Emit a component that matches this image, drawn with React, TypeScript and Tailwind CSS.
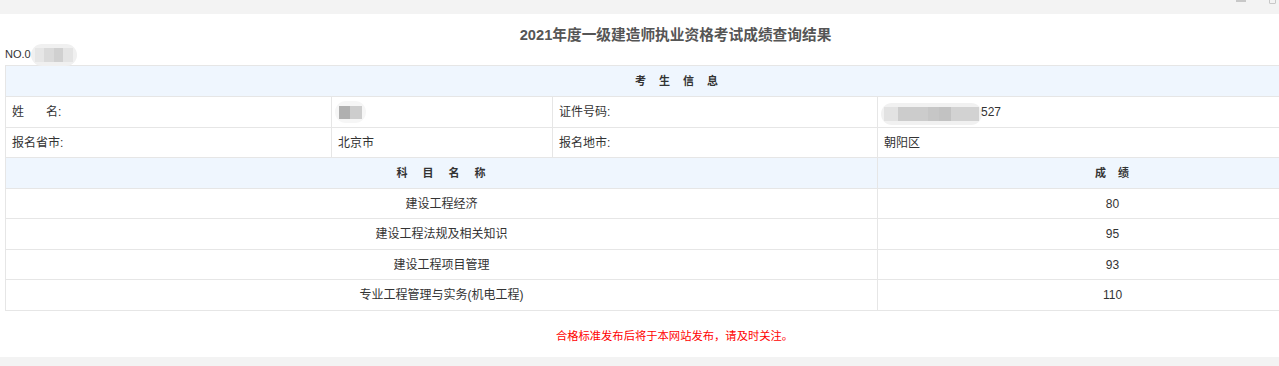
import React from "react"

const font = { fontFamily: '"Liberation Sans", "Noto Sans CJK SC", sans-serif' }

const subjects = [
  { name: "建设工程经济", score: "80", h: "h-[30px]" },
  { name: "建设工程法规及相关知识", score: "95", h: "h-[31px]" },
  { name: "建设工程项目管理", score: "93", h: "h-[30px]" },
  { name: "专业工程管理与实务(机电工程)", score: "110", h: "h-[31px]" },
]

const td = "border border-[#e6e6e6] px-[6px] align-middle"

export default function App() {
  return (
    <div className="w-[1279px] h-[366px] bg-[#f3f3f3] text-[12px] text-[#333] overflow-hidden" style={font}>
      <div className="h-[14px] relative">
        <span className="absolute left-[1236px] top-0 w-[10px] h-[2px] bg-[#c8c8c8]" />
        <span className="absolute left-[1269px] top-[-2px] w-[7px] h-[6px] border border-[#c8c8c8] rounded-[1px]" />
      </div>
      <div className="bg-white h-[343px] pt-[12px] overflow-hidden">
        <h1 className="text-center text-[14.7px] font-bold text-[#555] leading-[18px] pl-[72px]">
          2021年度一级建造师执业资格考试成绩查询结果
        </h1>
        <div className="flex items-center h-[21px] px-[5px] text-[11px] leading-none">
          <span>NO.0</span>
          <span className="inline-flex items-center rounded-full bg-[#f0f0f0] w-[46px] h-[22px] px-[4px] blur-[0.6px]">
            <span className="inline-block h-[14px] flex-1 bg-[#e6e6e6]" />
            <span className="inline-block h-[14px] flex-1 bg-[#dadada]" />
            <span className="inline-block h-[14px] flex-1 bg-[#d0d0d0]" />
            <span className="inline-block h-[14px] flex-1 bg-[#e4e4e4]" />
          </span>
        </div>
        <div className="pl-[5px] w-[1360px]">
          <table className="w-[1342px] border-collapse table-fixed">
            <colgroup>
              <col className="w-[326px]" />
              <col className="w-[221px]" />
              <col className="w-[325px]" />
              <col className="w-[470px]" />
            </colgroup>
            <tbody>
              <tr className="h-[31px] bg-[#eff6fe]">
                <td colSpan={4} className={`${td} text-center text-[11px] font-bold tracking-[13px] pl-[19px]`}>考生信息</td>
              </tr>
              <tr className="h-[31px]">
                <td className={td}>姓<span className="inline-block w-[22px]" />名:</td>
                <td className={`${td} pl-[3px]`}>
                  <span className="inline-flex items-center rounded-full bg-[#f6f6f6] w-[31px] h-[22px] px-[4px] align-middle">
                    <span className="inline-block w-[11px] h-[13px] bg-[#b0b0b0]" />
                    <span className="inline-block w-[12px] h-[13px] bg-[#cdcdcd]" />
                  </span>
                </td>
                <td className={td}>证件号码:</td>
                <td className={`${td} pl-[3px]`}>
                  <span className="inline-flex items-center">
                    <span className="inline-flex items-center rounded-full bg-[#f1f1f1] w-[101px] h-[22px] px-[3px] mt-[4px]">
                      <span className="inline-block w-[14px] h-[14px] bg-[#e2e2e2]" />
                      <span className="inline-block w-[30px] h-[14px] bg-[#cccccc]" />
                      <span className="inline-block w-[12px] h-[14px] bg-[#c6c6c6]" />
                      <span className="inline-block w-[12px] h-[14px] bg-[#c2c2c2]" />
                      <span className="inline-block w-[28px] h-[14px] bg-[#d2d2d2]" />
                    </span>
                    <span className="-ml-[1px]">527</span>
                  </span>
                </td>
              </tr>
              <tr className="h-[30px]">
                <td className={td}>报名省市:</td>
                <td className={td}>北京市</td>
                <td className={td}>报名地市:</td>
                <td className={td}>朝阳区</td>
              </tr>
            </tbody>
          </table>
          <table className="w-[1342px] border-collapse table-fixed -mt-[1px]">
            <colgroup>
              <col className="w-[872px]" />
              <col className="w-[470px]" />
            </colgroup>
            <tbody>
              <tr className="h-[31px] bg-[#eff6fe] font-bold text-[11px]">
                <td className={`${td} text-center tracking-[15px] pl-[20px]`}>科目名称</td>
                <td className={`${td} text-center tracking-[12px] pl-[17px]`}>成绩</td>
              </tr>
              {subjects.map((s) => (
                <tr key={s.name} className={s.h}>
                  <td className={`${td} text-center`}>{s.name}</td>
                  <td className={`${td} text-center`}>{s.score}</td>
                </tr>
              ))}
            </tbody>
          </table>
        </div>
        <p className="text-center text-[#ff0000] text-[11.3px] mt-[17px] pl-[70px]">
          合格标准发布后将于本网站发布，请及时关注。
        </p>
      </div>
    </div>
  )
}
